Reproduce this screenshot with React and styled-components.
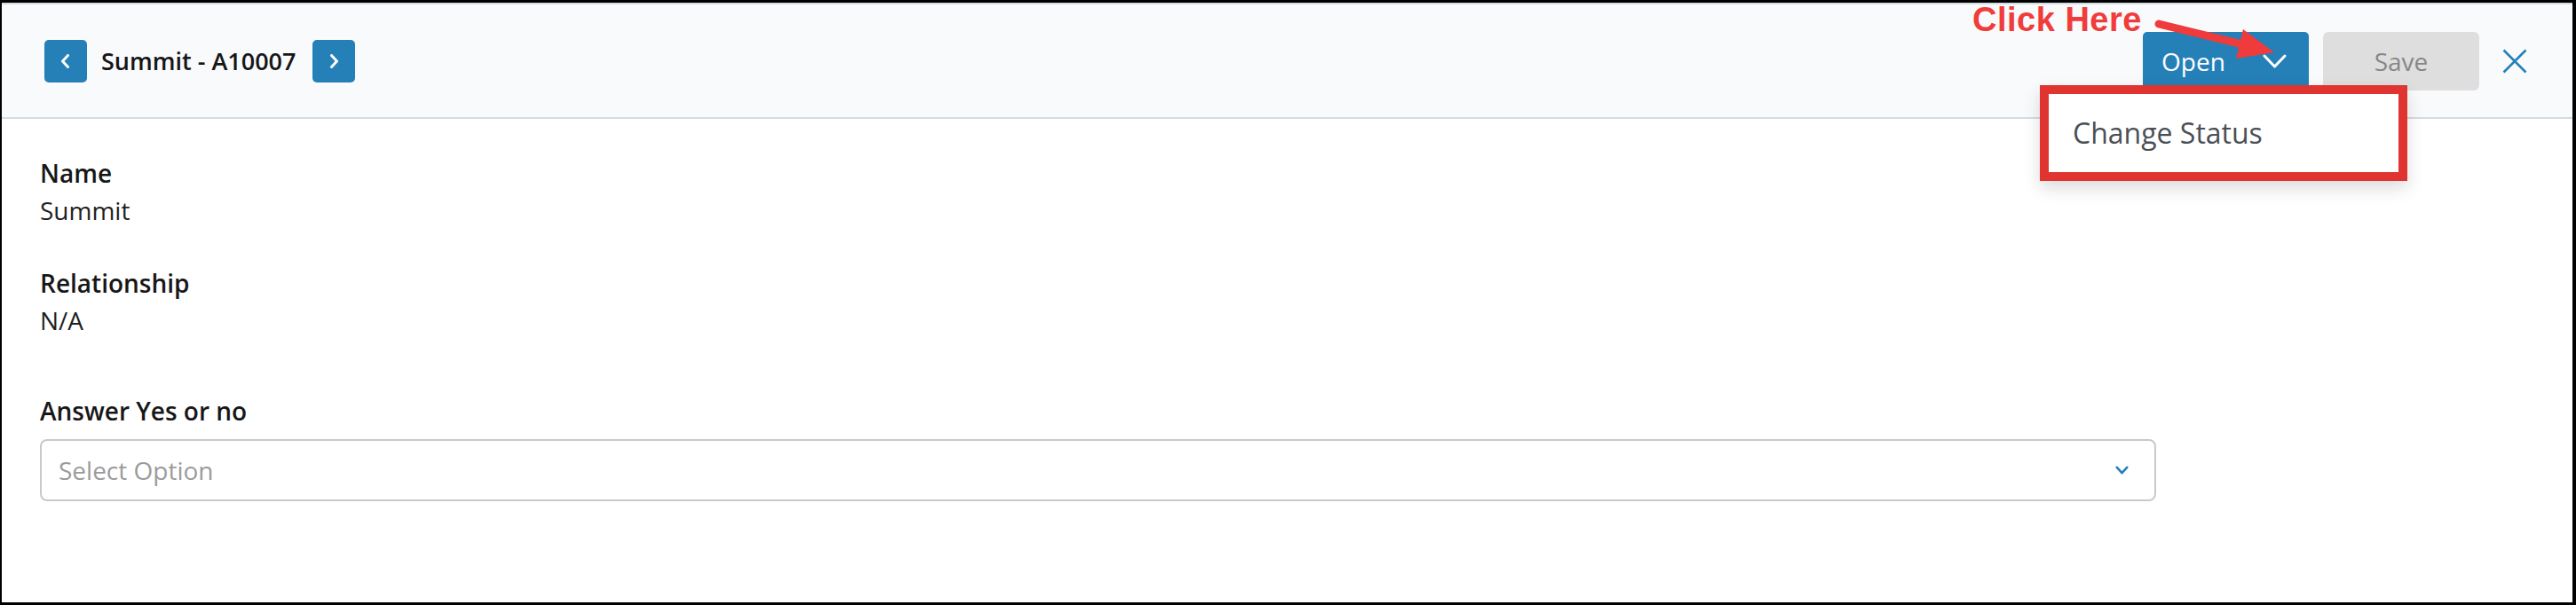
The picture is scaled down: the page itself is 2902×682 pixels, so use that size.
import React from "react";
import styled, { createGlobalStyle } from "styled-components";

const Global = createGlobalStyle`
  html, body { margin: 0; padding: 0; background: #fff; }
  body { font-family: "Open Sans", "Noto Sans", sans-serif; }
  * { box-sizing: border-box; }
`;

const BLUE = "#2580b8";

const Frame = styled.div`
  position: relative;
  width: 2902px;
  height: 682px;
  border-style: solid;
  border-color: #000;
  border-width: 3px 4px 3px 2px;
  background: #fff;
  overflow: hidden;
`;

const Header = styled.header`
  height: 131px;
  display: flex;
  align-items: center;
  justify-content: space-between;
  padding: 0 51px 0 48px;
  background: #f9fafc;
  border-top: 2px solid #d3dce2;
  border-bottom: 2px solid #d3dce2;
`;

const NavGroup = styled.div`
  display: flex;
  align-items: center;
`;

const NavButton = styled.button`
  width: 48px;
  height: 48px;
  border: none;
  border-radius: 5px;
  background: ${BLUE};
  display: flex;
  align-items: center;
  justify-content: center;
  padding: 0;
  cursor: pointer;
`;

const Title = styled.h1`
  margin: 0 19px 0 16px;
  font-size: 27px;
  font-weight: 600;
  color: #161616;
  line-height: 40px;
`;

const Actions = styled.div`
  display: flex;
  align-items: center;
`;

const MenuAnchor = styled.div`
  position: relative;
  margin-right: 16px;
`;

const StatusButton = styled.button`
  height: 66px;
  width: 187px;
  display: flex;
  align-items: center;
  padding: 0 25px 0 21px;
  border: none;
  border-radius: 5px;
  background: ${BLUE};
  color: #fff;
  font-family: "Open Sans", sans-serif;
  font-size: 28px;
  font-weight: 500;
  cursor: pointer;
`;

const StatusLabel = styled.span`
  flex: 1;
  text-align: left;
`;

const SaveButton = styled.button`
  height: 66px;
  width: 176px;
  border: none;
  border-radius: 6px;
  background: #dedede;
  color: #878787;
  font-family: "Open Sans", sans-serif;
  font-size: 28px;
  font-weight: 500;
  cursor: default;
`;

const CloseButton = styled.button`
  margin-left: 26px;
  width: 28px;
  height: 28px;
  padding: 0;
  border: none;
  background: transparent;
  display: flex;
  cursor: pointer;
`;

const Menu = styled.div`
  position: absolute;
  left: -116px;
  top: 60px;
  width: 414px;
  height: 108px;
  background: #fff;
  border: 10px solid #df3430;
  box-shadow: 0 8px 18px rgba(0, 0, 0, 0.14);
  display: flex;
  align-items: center;
  padding-left: 27px;
  z-index: 2;
`;

const MenuItem = styled.div`
  font-size: 32px;
  color: #4a4f56;
  line-height: 44px;
`;

const Body = styled.main`
  padding: 40px 0 0 43px;
`;

const Field = styled.div`
  margin-bottom: ${(p) => p.$gap || 40}px;
`;

const Label = styled.div`
  font-size: 28px;
  font-weight: 600;
  line-height: 42px;
  color: #171717;
`;

const Value = styled.div`
  font-size: 28px;
  font-weight: 400;
  line-height: 42px;
  color: #1f1f1f;
`;

const SelectBox = styled.div`
  margin-top: 11px;
  width: 2384px;
  height: 70px;
  border: 2px solid #c9c9c9;
  border-radius: 8px;
  display: flex;
  align-items: center;
  justify-content: space-between;
  padding: 0 29px 0 19px;
  background: #fff;
`;

const Placeholder = styled.span`
  font-size: 28px;
  color: #9b9b9b;
`;

const ClickHere = styled.div`
  position: absolute;
  left: 2220px;
  top: 0px;
  font-family: "Liberation Sans", Arial, sans-serif;
  font-weight: 700;
  font-size: 38px;
  line-height: 38px;
  color: #f03d3b;
  letter-spacing: 0.5px;
  z-index: 3;
`;

const Arrow = styled.svg`
  position: absolute;
  left: 2408px;
  top: 7px;
  z-index: 3;
`;

const ChevronLeft = () => (
  <svg width="16" height="16" viewBox="0 0 16 16">
    <polyline points="10.5,1.5 4.5,8 10.5,14.5" fill="none" stroke="#fff" strokeWidth="3" strokeLinecap="round" strokeLinejoin="round" />
  </svg>
);

const ChevronRight = () => (
  <svg width="16" height="16" viewBox="0 0 16 16">
    <polyline points="5.5,1.5 11.5,8 5.5,14.5" fill="none" stroke="#fff" strokeWidth="3" strokeLinecap="round" strokeLinejoin="round" />
  </svg>
);

const ChevronDown = ({ w, h, color, sw }) => (
  <svg width={w} height={h} viewBox={`0 0 ${w} ${h}`}>
    <polyline
      points={`${sw / 2 + 0.5},${sw / 2 + 0.5} ${w / 2},${h - sw / 2 - 0.5} ${w - sw / 2 - 0.5},${sw / 2 + 0.5}`}
      fill="none"
      stroke={color}
      strokeWidth={sw}
      strokeLinecap="round"
      strokeLinejoin="round"
    />
  </svg>
);

export default function App() {
  return (
    <>
      <Global />
      <Frame>
        <Header>
          <NavGroup>
            <NavButton aria-label="Previous">
              <ChevronLeft />
            </NavButton>
            <Title>Summit - A10007</Title>
            <NavButton aria-label="Next">
              <ChevronRight />
            </NavButton>
          </NavGroup>
          <Actions>
            <MenuAnchor>
              <StatusButton>
                <StatusLabel>Open</StatusLabel>
                <ChevronDown w={27} h={16} color="#fff" sw={3} />
              </StatusButton>
              <Menu>
                <MenuItem>Change Status</MenuItem>
              </Menu>
            </MenuAnchor>
            <SaveButton>Save</SaveButton>
            <CloseButton aria-label="Close">
              <svg width="28" height="28" viewBox="0 0 28 28">
                <path d="M1.5 1.5 L26.5 26.5 M26.5 1.5 L1.5 26.5" stroke={BLUE} strokeWidth="2.6" fill="none" />
              </svg>
            </CloseButton>
          </Actions>
        </Header>
        <Body>
          <Field>
            <Label>Name</Label>
            <Value>Summit</Value>
          </Field>
          <Field $gap={60}>
            <Label>Relationship</Label>
            <Value>N/A</Value>
          </Field>
          <Field>
            <Label>Answer Yes or no</Label>
            <SelectBox>
              <Placeholder>Select Option</Placeholder>
              <ChevronDown w={15} h={10} color={BLUE} sw={2.6} />
            </SelectBox>
          </Field>
        </Body>
        <ClickHere>Click Here</ClickHere>
        <Arrow width="160" height="64" viewBox="0 0 160 64">
          <line x1="22" y1="17" x2="112" y2="39" stroke="#ef3b3b" strokeWidth="9" strokeLinecap="round" />
          <polygon points="152,49 109,56 117,23" fill="#ef3b3b" />
        </Arrow>
      </Frame>
    </>
  );
}
